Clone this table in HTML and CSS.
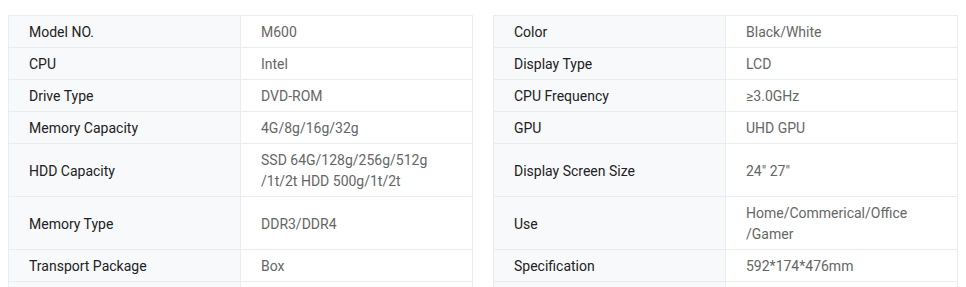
FILE: index.html
```html
<!DOCTYPE html>
<html lang="en">
<head>
<meta charset="utf-8">
<title>Specifications</title>
<link rel="stylesheet" href="styles.css">
</head>
<body>
<div class="specs">
  <div class="cell label top">Model NO.</div><div class="cell value top">M600</div><div class="gap"></div>
  <div class="cell label top">Color</div><div class="cell value top">Black/White</div>

  <div class="cell label">CPU</div><div class="cell value">Intel</div><div class="gap"></div>
  <div class="cell label">Display Type</div><div class="cell value">LCD</div>

  <div class="cell label">Drive Type</div><div class="cell value">DVD-ROM</div><div class="gap"></div>
  <div class="cell label">CPU Frequency</div><div class="cell value">≥3.0GHz</div>

  <div class="cell label">Memory Capacity</div><div class="cell value">4G/8g/16g/32g</div><div class="gap"></div>
  <div class="cell label">GPU</div><div class="cell value">UHD GPU</div>

  <div class="cell label">HDD Capacity</div><div class="cell value">SSD 64G/128g/256g/512g /1t/2t HDD 500g/1t/2t</div><div class="gap"></div>
  <div class="cell label">Display Screen Size</div><div class="cell value">24" 27"</div>

  <div class="cell label">Memory Type</div><div class="cell value">DDR3/DDR4</div><div class="gap"></div>
  <div class="cell label">Use</div><div class="cell value">Home/Commerical/Office /Gamer</div>

  <div class="cell label">Transport Package</div><div class="cell value">Box</div><div class="gap"></div>
  <div class="cell label">Specification</div><div class="cell value">592*174*476mm</div>

  <div class="cell label"></div><div class="cell value"></div><div class="gap"></div>
  <div class="cell label"></div><div class="cell value"></div>
</div>
</body>
</html>
```
FILE: styles.css
```css
html, body {
  margin: 0;
  padding: 0;
  background: #ffffff;
}

body {
  padding: 15px 8px 0 8px;
  font-family: Roboto, "Liberation Sans", Arial, sans-serif;
  font-size: 14px;
}

.specs {
  display: grid;
  grid-template-columns: 232px 233px 20px 232px 233px;
}

.cell {
  box-sizing: border-box;
  display: flex;
  align-items: center;
  padding: 6px 21px 4px 20px;
  line-height: 21px;
  min-height: 32px;
  border-bottom: 1px solid #e9edf3;
  border-left: 1px solid #e9edf3;
}

.cell.top {
  border-top: 1px solid #e9edf3;
}

.label {
  background: #f8f9fb;
  color: #222222;
}

.value {
  background: #ffffff;
  color: #666666;
  border-right: 1px solid #e9edf3;
}
```
